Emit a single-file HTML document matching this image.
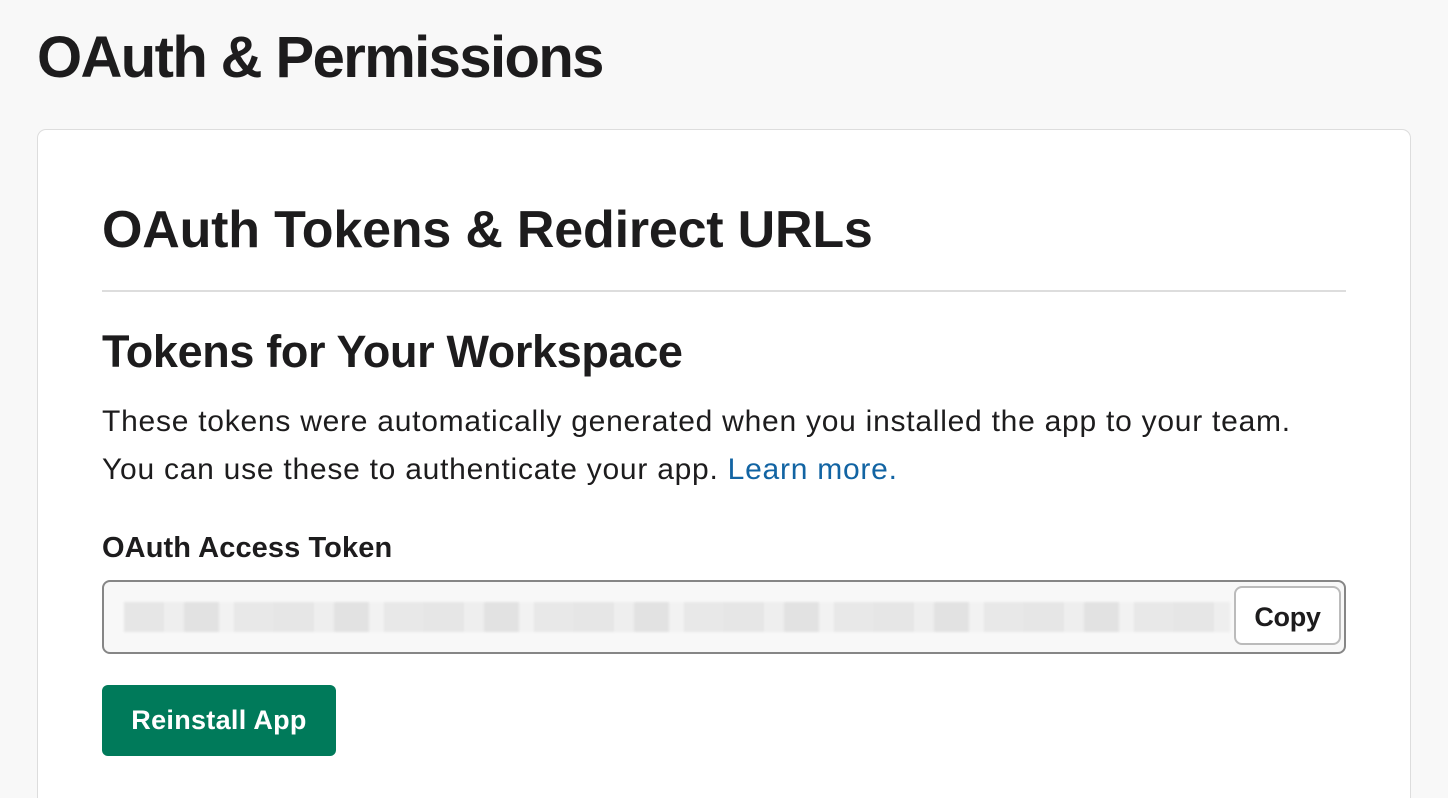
<!DOCTYPE html>
<html><head><style>
html,body{margin:0;height:798px;overflow:hidden}
body{background:#f8f8f8;width:1448px;font-family:"Liberation Sans",sans-serif;color:#1d1c1d;position:relative}
.h1{position:absolute;left:37px;top:24px;font-size:58px;font-weight:700;letter-spacing:-1.6px;margin:0;white-space:nowrap}
.card{position:absolute;left:37px;top:129px;width:1372px;height:700px;background:#fff;border:1px solid #ddd;border-radius:9px}
.h2{position:absolute;left:102px;top:200px;font-size:52px;font-weight:700;letter-spacing:-0.2px;white-space:nowrap}
.hr{position:absolute;left:102px;top:290px;width:1244px;height:2px;background:#ddd}
.h3{position:absolute;left:102px;top:326px;font-size:45px;font-weight:700;letter-spacing:-0.35px;white-space:nowrap}
.p{position:absolute;left:102px;top:398px;font-size:30px;line-height:48px;letter-spacing:0.75px;white-space:nowrap}
.p a{color:#1264a3;text-decoration:none}
.lbl{position:absolute;left:102px;top:532px;font-size:29px;font-weight:700;letter-spacing:0.1px}
.inp{position:absolute;left:102px;top:580px;width:1240px;height:70px;border:2px solid #868686;border-radius:8px;background:#f8f8f8;overflow:hidden}
.blur{position:absolute;left:20px;top:20px;width:1106px;height:30px;background:repeating-linear-gradient(90deg,#e6e6e6 0 40px,#eeeeee 40px 60px,#e2e2e2 60px 95px,#f2f2f2 95px 110px,#e8e8e8 110px 150px);filter:blur(1px)}
.copy{position:absolute;left:1234px;top:586px;width:103px;height:55px;border:2px solid #bbb;border-radius:8px;background:#fff;font-size:27px;font-weight:700;text-align:center;line-height:58px;letter-spacing:-0.3px}
.btn{position:absolute;left:102px;top:685px;width:234px;height:71px;background:#007a5a;border-radius:6px;color:#fff;font-size:27px;font-weight:700;text-align:center;line-height:71px;letter-spacing:0.3px}
</style></head><body>
<div class="h1">OAuth &amp; Permissions</div>
<div class="card"></div>
<div class="h2">OAuth Tokens &amp; Redirect URLs</div>
<div class="hr"></div>
<div class="h3">Tokens for Your Workspace</div>
<div class="p">These tokens were automatically generated when you installed the app to your team.<br>You can use these to authenticate your app. <a>Learn more.</a></div>
<div class="lbl">OAuth Access Token</div>
<div class="inp"><div class="blur"></div></div>
<div class="copy">Copy</div>
<div class="btn">Reinstall App</div>
</body></html>
